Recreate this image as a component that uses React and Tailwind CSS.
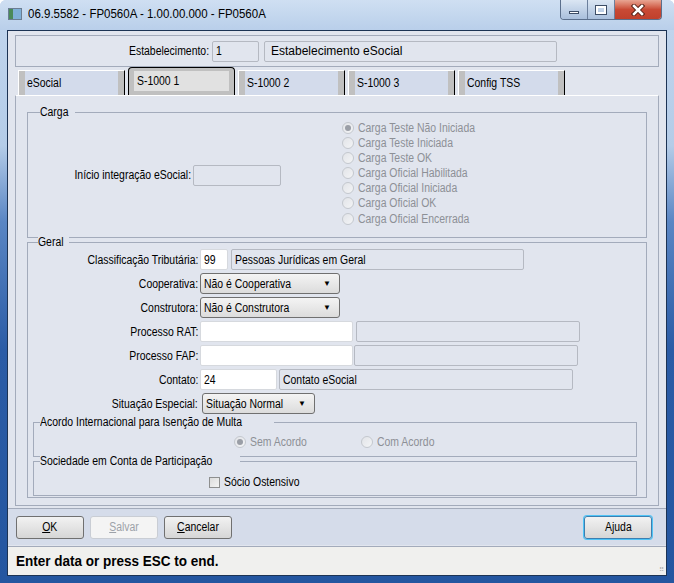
import React from "react";

const font = "font-['Liberation_Sans',Arial,sans-serif]";

// narrow text: the original dialog uses a condensed face
const T = ({ children, right }) => (
  <span className={`inline-block whitespace-nowrap scale-x-[0.87] ${right ? "origin-right" : "origin-left"}`}>
    {children}
  </span>
);

const GroupBox = ({ title, className, labelLeft = "left-[10px]", children }) => (
  <div className={`relative border border-[#a3abbb] ${className}`}>
    <span className={`absolute -top-[8px] ${labelLeft} bg-[#e1e5ee] pr-[2px] text-[12px] leading-[14px] text-black`}>
      <T>{title}</T>
    </span>
    {children}
  </div>
);

const Radio = ({ checked, label, className = "" }) => (
  <div className={`flex items-center h-[15px] ${className}`}>
    <span className="w-[12px] h-[12px] shrink-0 rounded-full border border-[#c4c8ce] bg-gradient-to-br from-[#e2e4e8] to-[#f3f4f6] flex items-center justify-center">
      {checked && <span className="w-[6px] h-[6px] rounded-full bg-[#9a9ea6]" />}
    </span>
    <span className="ml-[4px] text-[12px] text-[#8d9096]">
      <T>{label}</T>
    </span>
  </div>
);

const Input = ({ value, className = "", gray }) => (
  <div
    className={`h-[21px] border rounded-[2px] flex items-center px-[3px] text-[12px] overflow-hidden ${
      gray ? "bg-[#e1e5ee] border-[#b5b9c2]" : "bg-white border-[#d6d9de]"
    } ${className}`}
  >
    <T>{value}</T>
  </div>
);

const Select = ({ value, className = "" }) => (
  <div
    className={`h-[21px] border border-[#707070] rounded-[3px] bg-gradient-to-b from-[#f4f4f4] to-[#dcdcdc] flex items-center pl-[3px] pr-[8px] text-[12px] ${className}`}
  >
    <span className="flex-1">
      <T>{value}</T>
    </span>
    <span className="text-[8px] leading-none">▼</span>
  </div>
);

const Row = ({ label, children }) => (
  <div className="flex items-center h-[21px]">
    <span className="w-[172px] text-right text-[12px] pr-[2px]">
      <T right>{label}</T>
    </span>
    {children}
  </div>
);

const Tab = ({ label, active }) =>
  active ? (
    <div className="w-[107px] h-[28px] -mt-[3px] border border-black border-b-0 rounded-t-[4px] bg-[#c0c0c0] px-[5px] pt-[3px] pb-[4px] flex">
      <div className="flex-1 bg-[#e1e1e1] flex items-center pl-[3px] text-[12px]">
        <T>{label}</T>
      </div>
    </div>
  ) : (
    <div className="w-[107px] h-[25px] border-t border-l border-white border-r border-r-black bg-[#d3dbeb] flex">
      <span className="w-[6px] bg-[#c0c0c0]" />
      <span className="flex-1 flex items-center pl-[2px] text-[12px]">
        <T>{label}</T>
      </span>
      <span className="w-[6px] bg-[#c0c0c0]" />
    </div>
  );

const Button = ({ children, disabled, focus, className = "" }) => (
  <div
    className={`h-[23px] w-[68px] rounded-[3px] flex items-center justify-center text-[12px] ${
      disabled
        ? "border border-[#c9cdd4] bg-[#f4f4f4] text-[#9da2a9]"
        : focus
        ? "border border-[#3c7fb1] bg-gradient-to-b from-[#f2f2f2] to-[#d6d6d6] shadow-[0_0_0_1px_#4fc4f6]"
        : "border border-[#707070] bg-gradient-to-b from-[#f2f2f2] to-[#d6d6d6]"
    } ${className}`}
  >
    <span className="inline-block scale-x-[0.87]">{children}</span>
  </div>
);

export default function App() {
  return (
    <div
      className={`w-[674px] h-[583px] flex flex-col bg-[linear-gradient(to_bottom,#c2d6ee_0%,#b4cce8_25%,#5a86c4_38%,#2b5ca6_60%,#2456a0_100%)] rounded-t-[6px] text-black ${font}`}
    >
      {/* title bar */}
      <div className="h-[30px] flex items-start px-[8px] bg-gradient-to-b from-[#cfdff2] to-[#b9cfea] rounded-t-[6px]">
        <div className="mt-[8px] w-[14px] h-[12px] border border-[#6b7d92] bg-white flex">
          <span className="w-[4px] bg-[#4a8a5a]" />
          <span className="flex-1 bg-[#7fb0d8]" />
        </div>
        <span className="ml-[6px] mt-[6px] text-[12.5px] leading-[16px]">
          <span className="inline-block origin-left scale-x-[0.92] whitespace-nowrap">
            06.9.5582 - FP0560A - 1.00.00.000 - FP0560A
          </span>
        </span>
        <div className="ml-auto mr-[4px] flex h-[20px] border border-[#5b6f8c] border-t-0 rounded-b-[4px] overflow-hidden">
          <div className="w-[27px] bg-gradient-to-b from-[#dbe6f3] to-[#a9bfdc] border-r border-[#6c7f9c] flex items-center justify-center">
            <span className="w-[10px] h-[3px] mt-[5px] bg-white border border-[#3d4d66]" />
          </div>
          <div className="w-[27px] bg-gradient-to-b from-[#dbe6f3] to-[#a9bfdc] border-r border-[#6c7f9c] flex items-center justify-center">
            <span className="w-[10px] h-[8px] border-2 border-white outline outline-1 outline-[#3d4d66]" />
          </div>
          <div className="w-[46px] bg-gradient-to-b from-[#e8a593] via-[#c94a35] to-[#c0402c] flex items-center justify-center">
            <svg width="14" height="12" viewBox="0 0 14 12">
              <path d="M3 2 L11 10 M11 2 L3 10" stroke="#5a2418" strokeWidth="4.5" strokeLinecap="square" />
              <path d="M3 2 L11 10 M11 2 L3 10" stroke="#ffffff" strokeWidth="2.5" strokeLinecap="square" />
            </svg>
          </div>
        </div>
      </div>

      {/* client */}
      <div className="mx-[7px] flex-1 border border-[#1c3354] bg-[#e1e5ee] flex flex-col">
        <div className="px-[7px] pt-[4px]">
          <div className="h-[32px] border border-[#a3abbb] flex items-center">
            <span className="w-[196px] text-right text-[12px] pr-[3px]">
              <T right>Estabelecimento:</T>
            </span>
            <Input value="1" gray className="w-[47px]" />
            <div className="w-[293px] ml-[5px] h-[21px] border border-[#b5b9c2] rounded-[2px] bg-[#e1e5ee] flex items-center px-[6px] text-[12px]">
              Estabelecimento eSocial
            </div>
          </div>
        </div>

        {/* tabs */}
        <div className="flex gap-[3px] pl-[10px] mt-[3px] h-[25px] items-end">
          <Tab label="eSocial" />
          <Tab label="S-1000 1" active />
          <Tab label="S-1000 2" />
          <Tab label="S-1000 3" />
          <Tab label="Config TSS" />
        </div>

        {/* tab panel */}
        <div className="mx-[7px] h-[411px] border border-[#a3abbb] border-t-white px-[11px] pt-[16px]">
          <GroupBox title="Carga" labelLeft="left-[12px]" className="h-[126px] flex">
            <div className="w-[314px] flex items-center">
              <span className="w-[165px] text-right text-[12px] pr-[2px]">
                <T right>Início integração eSocial:</T>
              </span>
              <Input value="" gray className="w-[88px]" />
            </div>
            <div className="pt-[7px] flex flex-col">
              <Radio checked label="Carga Teste Não Iniciada" />
              <Radio label="Carga Teste Iniciada" />
              <Radio label="Carga Teste OK" />
              <Radio label="Carga Oficial Habilitada" />
              <Radio label="Carga Oficial Iniciada" />
              <Radio label="Carga Oficial OK" />
              <Radio label="Carga Oficial Encerrada" className="mt-[1px]" />
            </div>
          </GroupBox>

          <GroupBox title="Geral" className="mt-[4px] h-[256px] pt-[6px] px-[5px]">
            <div className="flex flex-col gap-[3px] -ml-[5px]">
              <Row label="Classificação Tributária:">
                <Input value="99" className="w-[28px]" />
                <Input value="Pessoas Jurídicas em Geral" gray className="w-[293px] ml-[3px]" />
              </Row>
              <Row label="Cooperativa:">
                <Select value="Não é Cooperativa" className="w-[140px]" />
              </Row>
              <Row label="Construtora:">
                <Select value="Não é Construtora" className="w-[140px]" />
              </Row>
              <Row label="Processo RAT:">
                <Input value="" className="w-[153px]" />
                <Input value="" gray className="w-[224px] ml-[3px]" />
              </Row>
              <Row label="Processo FAP:">
                <Input value="" className="w-[153px]" />
                <Input value="" gray className="w-[224px] ml-[1px]" />
              </Row>
              <Row label="Contato:">
                <Input value="24" className="w-[77px]" />
                <Input value="Contato eSocial" gray className="w-[294px] ml-[2px]" />
              </Row>
              <Row label="Situação Especial:">
                <Select value="Situação Normal" className="w-[113px] ml-[2px]" />
              </Row>
            </div>

            <GroupBox
              title="Acordo Internacional para Isenção de Multa"
              labelLeft="left-[6px]"
              className="mt-[8px] mr-[4px] h-[35px] flex items-center"
            >
              <div className="ml-[200px] mt-[4px] w-[127px]">
                <Radio checked label="Sem Acordo" />
              </div>
              <Radio label="Com Acordo" className="mt-[4px]" />
            </GroupBox>

            <GroupBox
              title="Sociedade em Conta de Participação"
              labelLeft="left-[6px]"
              className="mt-[4px] mr-[4px] h-[35px] flex items-center"
            >
              <div className="ml-[175px] mt-[7px] flex items-center">
                <span className="w-[11px] h-[11px] border border-[#8e8f8f] bg-gradient-to-br from-[#dcdcdc] to-[#f4f4f4]" />
                <span className="ml-[4px] text-[12px]">
                  <T>Sócio Ostensivo</T>
                </span>
              </div>
            </GroupBox>
          </GroupBox>
        </div>

        {/* button bar */}
        <div className="mt-[2px] h-[37px] border-t border-[#a3abbb] bg-[#d5dcea] flex items-center px-[8px]">
          <Button><u>O</u>K</Button>
          <Button disabled className="ml-[6px]"><u>S</u>alvar</Button>
          <Button className="ml-[6px]"><u>C</u>ancelar</Button>
          <Button focus className="ml-auto mr-[6px]">A<u>j</u>uda</Button>
        </div>

        {/* status bar */}
        <div className="mt-[1px] flex-1 border-t border-[#a3abbb] bg-[#f0f0ee] flex items-center px-[8px] relative">
          <span className="text-[15px] font-bold">
            <span className="inline-block origin-left scale-x-[0.9] whitespace-nowrap">Enter data or press ESC to end.</span>
          </span>
          <span className="absolute right-[2px] bottom-[2px] text-[7px] leading-none text-[#b0b0b0]">⠿</span>
        </div>
      </div>
      <div className="h-[7px]" />
    </div>
  );
}
